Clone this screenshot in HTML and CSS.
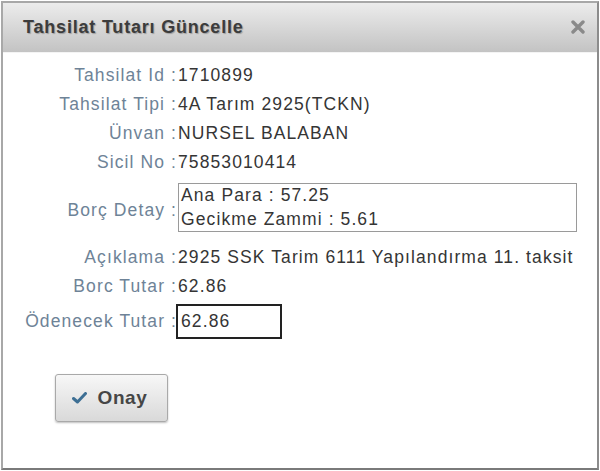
FILE: index.html
```html
<!DOCTYPE html>
<html lang="tr">
<head>
    <meta charset="UTF-8">
    <title>Tahsilat Tutarı Güncelle</title>
    <link rel="stylesheet" href="styles.css">
</head>
<body>

    <div class="dialog">
        <div class="dialog-title">
            <span>Tahsilat Tutarı Güncelle</span>
            <svg class="close" width="14" height="14" viewBox="0 0 14 14">
                <path d="M2 2 L12 12 M12 2 L2 12" stroke="#8a8a8a" stroke-width="3.4" stroke-linecap="round"/>
            </svg>
        </div>

        <div class="dialog-body">
            <div class="row">
                <div class="label">Tahsilat Id :</div>
                <div class="value">1710899</div>
            </div>
            <div class="row">
                <div class="label">Tahsilat Tipi :</div>
                <div class="value">4A Tarım 2925(TCKN)</div>
            </div>
            <div class="row">
                <div class="label">Ünvan :</div>
                <div class="value">NURSEL BALABAN</div>
            </div>
            <div class="row">
                <div class="label">Sicil No :</div>
                <div class="value">75853010414</div>
            </div>
            <div class="row detail-row">
                <div class="label">Borç Detay :</div>
                <div class="detail-box">
                    <div>Ana Para : 57.25</div>
                    <div>Gecikme Zammi : 5.61</div>
                </div>
            </div>
            <div class="row">
                <div class="label">Açıklama :</div>
                <div class="value">2925 SSK Tarim 6111 Yapılandırma 11. taksit</div>
            </div>
            <div class="row">
                <div class="label">Borc Tutar :</div>
                <div class="value">62.86</div>
            </div>
            <div class="row input-row">
                <div class="label">Ödenecek Tutar :</div>
                <input class="amount" type="text" value="62.86">
            </div>

            <div class="actions">
                <button type="button" class="btn">
                    <svg width="15" height="12" viewBox="0 0 15 12">
                        <path d="M1.5 6.5 L5.5 10 L13.5 1.5" fill="none" stroke="#3d6f94" stroke-width="3" stroke-linecap="round" stroke-linejoin="round"/>
                    </svg>
                    Onay
                </button>
            </div>
        </div>
    </div>

</body>
</html>
```

FILE: styles.css
```css
body {
    margin: 0;
    padding: 1px;
    background-color: #fff;
    font-family: 'Liberation Sans', Arial, sans-serif;
}

.dialog {
    width: 594px;
    height: 465px;
    border: 2px solid #a8a8a8;
    border-right-color: #8c8c8c;
    border-bottom-color: #7a7a7a;
    background-color: #fff;
}

.dialog-title {
    height: 49px;
    display: flex;
    align-items: center;
    justify-content: space-between;
    padding: 0 12px 0 20px;
    background: linear-gradient(to bottom, #ececec, #c3c3c3);
    border-bottom: 1px solid #f4f4f4;
    font-size: 18px;
    font-weight: bold;
    letter-spacing: 0.8px;
    color: #3c3c3c;
    text-shadow: 1px 1px 1px rgba(0, 0, 0, 0.25);
}

.close {
    margin-top: -2px;
}

.dialog-body {
    padding-top: 8px;
}

.row {
    display: grid;
    grid-template-columns: 175px 1fr;
    align-items: center;
    height: 29px;
    font-size: 17.5px;
    letter-spacing: 1.1px;
}

.label {
    text-align: right;
    color: #6e8397;
    padding-right: 1px;
    white-space: nowrap;
}

.value {
    color: #353535;
    white-space: nowrap;
}

.detail-row {
    height: auto;
    padding: 6px 0 11px;
}

.detail-row .label {
    padding-top: 6px;
}

.detail-box {
    width: 393px;
    border: 1px solid #9a9a9a;
    padding: 0 2px;
    line-height: 23.5px;
    color: #353535;
    white-space: nowrap;
}

.input-row {
    height: auto;
    padding-top: 3px;
}

.amount {
    width: 96px;
    height: 31px;
    margin-left: -2px;
    padding: 0 3px;
    border: 2px solid #222;
    font-family: 'Liberation Sans', Arial, sans-serif;
    font-size: 17.5px;
    letter-spacing: 1.1px;
    color: #353535;
    outline: none;
}

.actions {
    padding: 35px 0 0 52px;
}

.btn {
    width: 113px;
    height: 48px;
    display: flex;
    align-items: center;
    justify-content: center;
    gap: 11px;
    padding: 0 4px 0 0;
    border: 1px solid #a9a9a9;
    border-radius: 3px;
    background: linear-gradient(to bottom, #f7f7f7, #d9d9d9);
    box-shadow: 0 1px 2px rgba(0, 0, 0, 0.25);
    font-family: 'Liberation Sans', Arial, sans-serif;
    font-size: 19px;
    font-weight: bold;
    letter-spacing: 0.6px;
    color: #464646;
    cursor: pointer;
}
```
